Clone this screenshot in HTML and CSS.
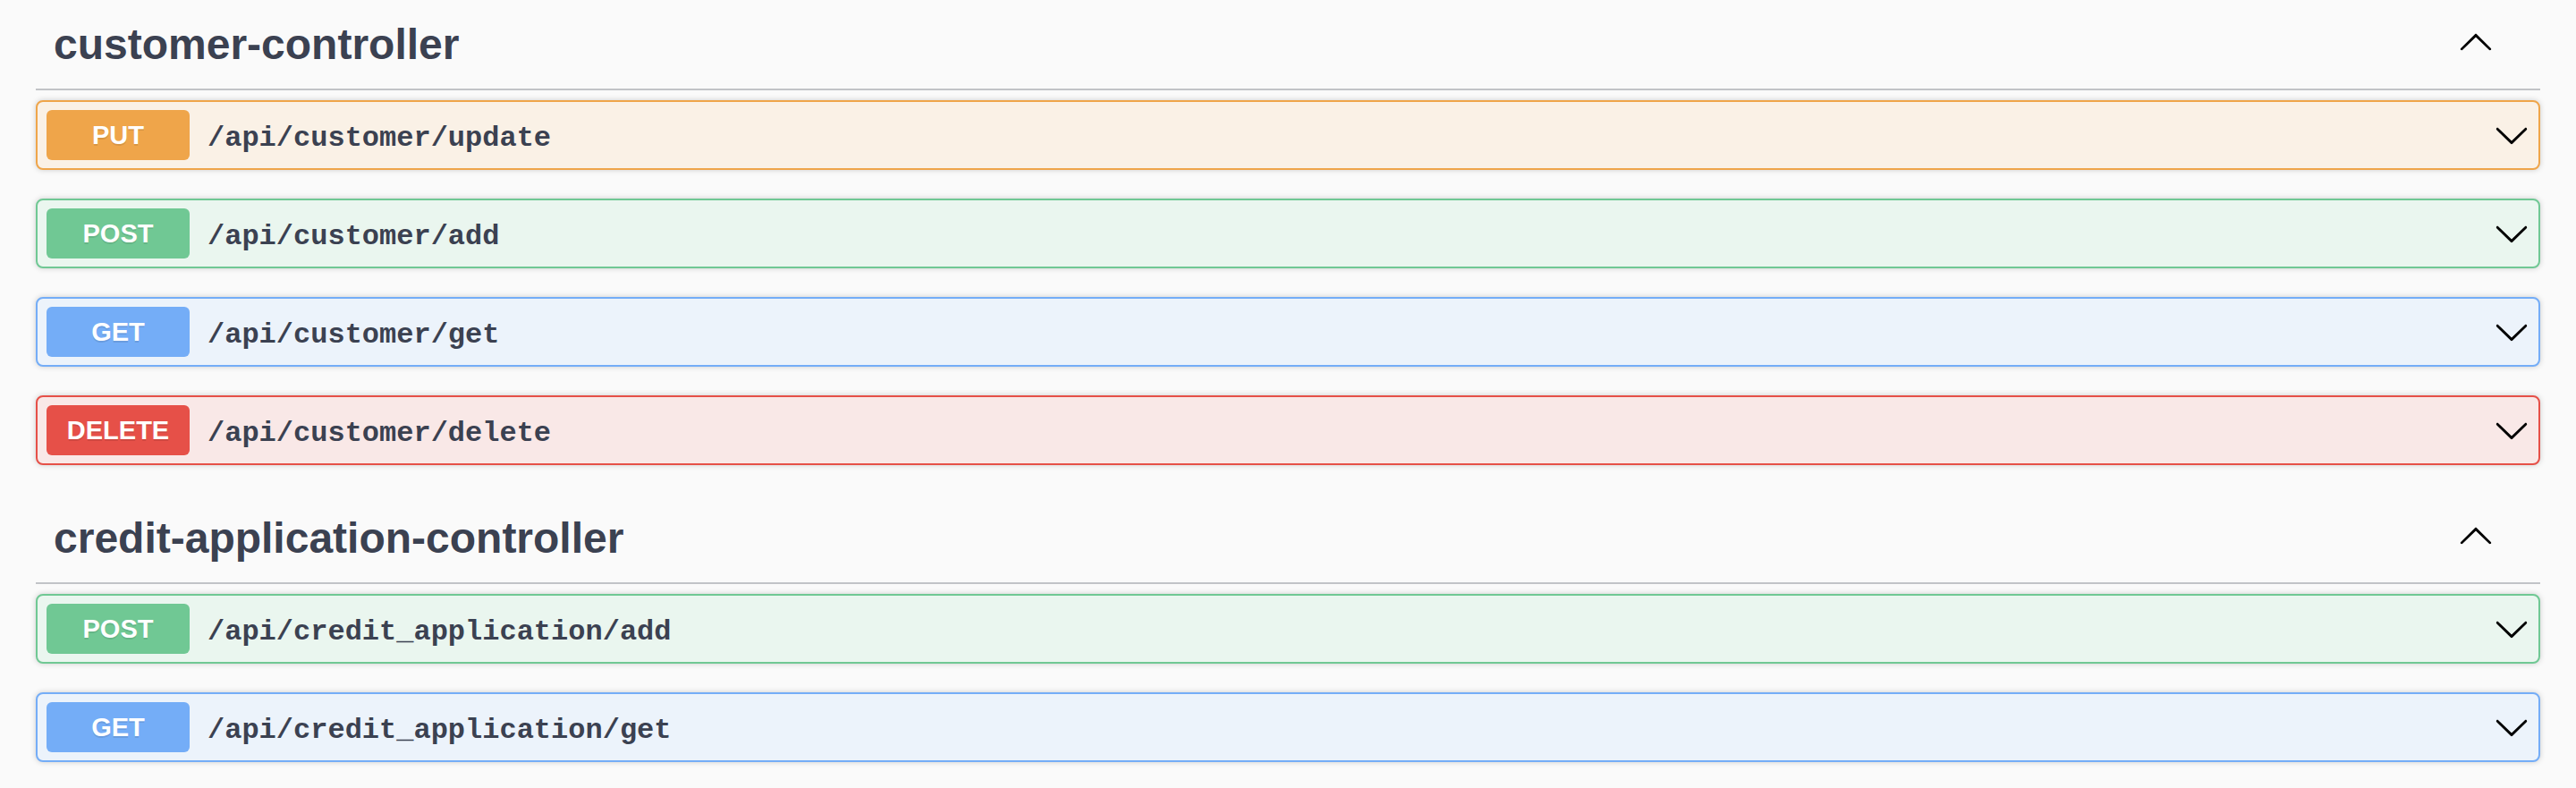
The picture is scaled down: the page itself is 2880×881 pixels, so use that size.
FILE: index.html
```html
<!DOCTYPE html>
<html>
<head>
<meta charset="utf-8">
<title>Swagger</title>
<link rel="stylesheet" href="styles.css">
</head>
<body>
<div class="wrapper">
  <section class="tag-section">
    <h3 class="tag">
      <span class="tag-title">customer-controller</span>
      <svg class="arrow-up" viewBox="0 0 20 20"><path d="M 17.418 14.908 C 17.69 15.176 18.127 15.176 18.397 14.908 C 18.667 14.64 18.668 14.207 18.397 13.939 L 10.489 6.109 C 10.219 5.841 9.782 5.841 9.51 6.109 L 1.602 13.939 C 1.332 14.207 1.332 14.64 1.602 14.908 C 1.873 15.176 2.311 15.176 2.581 14.908 L 10 7.767 L 17.418 14.908 Z"/></svg>
    </h3>
    <div class="op op-put">
      <span class="method">PUT</span>
      <span class="path">/api/customer/update</span>
      <svg class="arrow-down" viewBox="0 0 20 20"><path d="M17.418 6.109c.272-.268.709-.268.979 0s.271.701 0 .969l-7.908 7.83c-.27.268-.707.268-.979 0l-7.908-7.830c-.27-.268-.27-.701 0-.969.271-.268.709-.268.979 0L10 13.25l7.418-7.141z"/></svg>
    </div>
    <div class="op op-post">
      <span class="method">POST</span>
      <span class="path">/api/customer/add</span>
      <svg class="arrow-down" viewBox="0 0 20 20"><path d="M17.418 6.109c.272-.268.709-.268.979 0s.271.701 0 .969l-7.908 7.83c-.27.268-.707.268-.979 0l-7.908-7.83c-.27-.268-.27-.701 0-.969.271-.268.709-.268.979 0L10 13.25l7.418-7.141z"/></svg>
    </div>
    <div class="op op-get">
      <span class="method">GET</span>
      <span class="path">/api/customer/get</span>
      <svg class="arrow-down" viewBox="0 0 20 20"><path d="M17.418 6.109c.272-.268.709-.268.979 0s.271.701 0 .969l-7.908 7.83c-.27.268-.707.268-.979 0l-7.908-7.83c-.27-.268-.27-.701 0-.969.271-.268.709-.268.979 0L10 13.25l7.418-7.141z"/></svg>
    </div>
    <div class="op op-delete">
      <span class="method">DELETE</span>
      <span class="path">/api/customer/delete</span>
      <svg class="arrow-down" viewBox="0 0 20 20"><path d="M17.418 6.109c.272-.268.709-.268.979 0s.271.701 0 .969l-7.908 7.83c-.27.268-.707.268-.979 0l-7.908-7.83c-.27-.268-.27-.701 0-.969.271-.268.709-.268.979 0L10 13.25l7.418-7.141z"/></svg>
    </div>
  </section>
  <section class="tag-section">
    <h3 class="tag">
      <span class="tag-title">credit-application-controller</span>
      <svg class="arrow-up" viewBox="0 0 20 20"><path d="M 17.418 14.908 C 17.69 15.176 18.127 15.176 18.397 14.908 C 18.667 14.64 18.668 14.207 18.397 13.939 L 10.489 6.109 C 10.219 5.841 9.782 5.841 9.51 6.109 L 1.602 13.939 C 1.332 14.207 1.332 14.64 1.602 14.908 C 1.873 15.176 2.311 15.176 2.581 14.908 L 10 7.767 L 17.418 14.908 Z"/></svg>
    </h3>
    <div class="op op-post">
      <span class="method">POST</span>
      <span class="path">/api/credit_application/add</span>
      <svg class="arrow-down" viewBox="0 0 20 20"><path d="M17.418 6.109c.272-.268.709-.268.979 0s.271.701 0 .969l-7.908 7.83c-.27.268-.707.268-.979 0l-7.908-7.83c-.27-.268-.27-.701 0-.969.271-.268.709-.268.979 0L10 13.25l7.418-7.141z"/></svg>
    </div>
    <div class="op op-get">
      <span class="method">GET</span>
      <span class="path">/api/credit_application/get</span>
      <svg class="arrow-down" viewBox="0 0 20 20"><path d="M17.418 6.109c.272-.268.709-.268.979 0s.271.701 0 .969l-7.908 7.83c-.27.268-.707.268-.979 0l-7.908-7.83c-.27-.268-.27-.701 0-.969.271-.268.709-.268.979 0L10 13.25l7.418-7.141z"/></svg>
    </div>
  </section>
</div>
</body>
</html>
```
FILE: styles.css
```css
html, body {
  margin: 0;
  padding: 0;
  background: #fafafa;
}

.wrapper {
  padding: 0 40px;
}

.tag {
  display: flex;
  align-items: center;
  height: 99px;
  margin: 0 0 11px 0;
  padding: 0 52px 0 20px;
  border-bottom: 2px solid #c1c3c7;
  font-family: "Liberation Sans", Arial, sans-serif;
  font-weight: bold;
  font-size: 48px;
  color: #3b4151;
}

.tag-title {
  flex: 1;
  line-height: normal;
}

.arrow-up {
  width: 40px;
  height: 40px;
  margin-bottom: 7px;
  fill: #000;
}

.op {
  display: flex;
  align-items: center;
  height: 74px;
  padding: 0 10px;
  margin-bottom: 32px;
  border: 2px solid;
  border-radius: 8px;
  box-shadow: 0 0 6px rgba(0, 0, 0, 0.19);
}

.method {
  flex: none;
  width: 160px;
  height: 56px;
  display: flex;
  align-items: center;
  justify-content: center;
  border-radius: 6px;
  color: #fff;
  font-family: "Liberation Sans", Arial, sans-serif;
  font-weight: bold;
  font-size: 29px;
  text-shadow: 0 2px 0 rgba(0, 0, 0, 0.1);
}

.path {
  flex: 1;
  padding: 6px 20px 0 20px;
  font-family: "Liberation Mono", "Courier New", monospace;
  font-weight: bold;
  font-size: 32px;
  color: #3b4151;
}

.arrow-down {
  flex: none;
  width: 40px;
  height: 40px;
  fill: #000;
}

.op-put { background: #faf1e6; border-color: #efa54a; }
.op-put .method { background: #efa54a; }

.op-post { background: #eaf6ef; border-color: #70c894; }
.op-post .method { background: #70c894; }

.op-get { background: #ecf3fb; border-color: #74adf7; }
.op-get .method { background: #74adf7; }

.op-delete { background: #f9e8e7; border-color: #e65048; }
.op-delete .method { background: #e65048; }
```
